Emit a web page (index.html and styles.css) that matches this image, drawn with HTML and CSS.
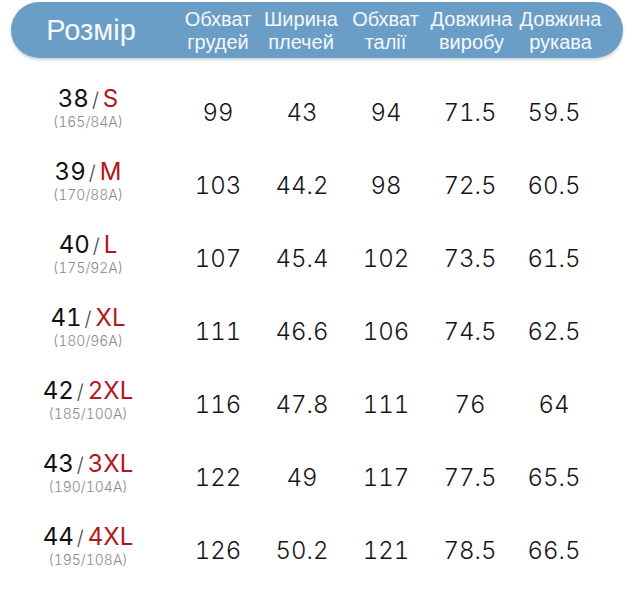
FILE: index.html
```html
<!DOCTYPE html>
<html lang="uk">
<head>
<meta charset="utf-8">
<link rel="stylesheet" href="styles.css">
</head>
<body>
<div class="page">
  <div class="head">
    <div class="h-size">Розмір</div>
    <div class="h-col">Обхват<br>грудей</div>
    <div class="h-col">Ширина<br>плечей</div>
    <div class="h-col">Обхват<br>талії</div>
    <div class="h-col">Довжина<br>виробу</div>
    <div class="h-col">Довжина<br>рукава</div>
  </div>
  <div class="rows">
    <div class="row">
      <div class="size"><div class="main"><span class="num">38</span><span class="sl">/</span><span class="let">S</span></div><div class="sub">(165/84A)</div></div>
      <div class="v">99</div><div class="v">43</div><div class="v">94</div><div class="v">71.5</div><div class="v">59.5</div>
    </div>
    <div class="row">
      <div class="size"><div class="main"><span class="num">39</span><span class="sl">/</span><span class="let">M</span></div><div class="sub">(170/88A)</div></div>
      <div class="v">103</div><div class="v">44.2</div><div class="v">98</div><div class="v">72.5</div><div class="v">60.5</div>
    </div>
    <div class="row">
      <div class="size"><div class="main"><span class="num">40</span><span class="sl">/</span><span class="let">L</span></div><div class="sub">(175/92A)</div></div>
      <div class="v">107</div><div class="v">45.4</div><div class="v">102</div><div class="v">73.5</div><div class="v">61.5</div>
    </div>
    <div class="row">
      <div class="size"><div class="main"><span class="num">41</span><span class="sl">/</span><span class="let">XL</span></div><div class="sub">(180/96A)</div></div>
      <div class="v">111</div><div class="v">46.6</div><div class="v">106</div><div class="v">74.5</div><div class="v">62.5</div>
    </div>
    <div class="row">
      <div class="size"><div class="main"><span class="num">42</span><span class="sl">/</span><span class="let">2XL</span></div><div class="sub">(185/100A)</div></div>
      <div class="v">116</div><div class="v">47.8</div><div class="v">111</div><div class="v">76</div><div class="v">64</div>
    </div>
    <div class="row">
      <div class="size"><div class="main"><span class="num">43</span><span class="sl">/</span><span class="let">3XL</span></div><div class="sub">(190/104A)</div></div>
      <div class="v">122</div><div class="v">49</div><div class="v">117</div><div class="v">77.5</div><div class="v">65.5</div>
    </div>
    <div class="row">
      <div class="size"><div class="main"><span class="num">44</span><span class="sl">/</span><span class="let">4XL</span></div><div class="sub">(195/108A)</div></div>
      <div class="v">126</div><div class="v">50.2</div><div class="v">121</div><div class="v">78.5</div><div class="v">66.5</div>
    </div>
  </div>
</div>
</body>
</html>
```
FILE: styles.css
```css
html, body {
  margin: 0;
  padding: 0;
  background: #ffffff;
}
body {
  font-family: "Liberation Sans", Arial, sans-serif;
  color: #1c1c1c;
}
.page {
  width: 638px;
  height: 595px;
  padding-top: 2px;
  box-sizing: border-box;
}
.head {
  margin-left: 11px;
  width: 612px;
  height: 56px;
  border-radius: 28px;
  background: #6a9ec7;
  box-shadow: 0 2px 3px rgba(60, 80, 100, 0.25);
  display: grid;
  grid-template-columns: 166px 82px 84px 85px 87px 91px;
  align-items: center;
  color: #f5f8fb;
}
.h-size {
  text-align: center;
  font-size: 29px;
  padding-top: 1px;
  padding-right: 6px;
}
.h-col {
  text-align: center;
  font-size: 20px;
  line-height: 23px;
  white-space: nowrap;
  padding-top: 1px;
}
.rows {
  margin-top: 16px;
}
.row {
  display: grid;
  grid-template-columns: 176px repeat(5, 84px);
  height: 73px;
  align-items: center;
  font-family: Inter, "Liberation Sans", sans-serif;
  font-weight: 300;
  font-variant-numeric: tabular-nums;
}
.size {
  display: flex;
  flex-direction: column;
  align-items: center;
  margin-top: -6px;
}
.main {
  font-size: 24px;
  line-height: 27px;
  white-space: nowrap;
}
.num {
  color: #111;
  font-weight: 400;
}
.sl {
  color: #444;
  font-size: 20px;
  margin: 0 4px 0 3px;
}
.let {
  color: #b3161c;
  font-weight: 400;
}
.sub {
  font-size: 14px;
  line-height: 16px;
  color: #8a8a8a;
}
.v {
  text-align: center;
  font-size: 24px;
  color: #151515;
  padding-top: 3px;
}
```
